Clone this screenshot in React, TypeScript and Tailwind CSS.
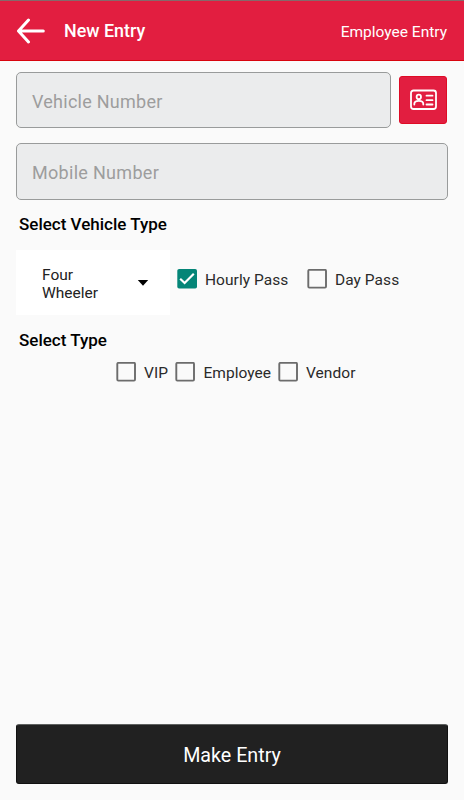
import { useState } from 'react'

interface CheckProps {
  label: string
  checked: boolean
  onChange: () => void
  className?: string
}

function Check ({ label, checked, onChange, className = '' }: CheckProps) {
  return (
    <button type="button" role="checkbox" aria-checked={checked} onClick={onChange} className={`flex h-5 shrink-0 items-center gap-2 ${className}`}>
      <svg width="20" height="20" viewBox="0 0 20 20" fill="none" className="shrink-0">
        {checked
          ? (
            <>
              <rect x=".3" width="19.700" height="19.500" rx="1.800" fill="#048577" />
              <path d="M3.200 9.800 7.600 14 16.800 4.800" stroke="#fff" strokeWidth="2.200" />
            </>
            )
          : <rect x="1.300" y=".9" width="17.700" height="17.700" rx="1" stroke="#6c6c6c" strokeWidth="1.900" />}
      </svg>
      <span className="whitespace-nowrap pt-px text-[15.5px] leading-5 tracking-[0.050px] text-[#2a2a2a]">{label}</span>
    </button>
  )
}

export default function App () {
  const [pass, setPass] = useState('hourly')
  const [type, setType] = useState('')

  return (
    <div className="flex h-[800px] w-[464px] flex-col bg-[#fafafa] font-['Roboto',sans-serif] text-black">
      <header className="flex h-[61px] shrink-0 items-center border-t border-b border-t-[#85696b] border-b-[#d8040e] bg-[#e21e40] px-4 text-white">
        <svg width="29" height="26" viewBox="0 0 29 26" fill="none" stroke="#fff" strokeWidth="3" strokeLinecap="round" strokeLinejoin="round">
          <path d="M12.500 2 2.500 13l10 11M3 13H27.300" />
        </svg>
        <h1 className="ml-[19px] text-[17.900px] font-medium leading-6">New Entry</h1>
        <span className="mt-[2px] mr-px ml-auto text-[15.500px] leading-6">Employee Entry</span>
      </header>

      <main className="flex flex-1 flex-col pt-[11px] pr-[17px] pl-4">
        <div className="flex items-center gap-2">
          <div className="flex h-14 w-[375px] items-center rounded-[5px] border border-[#999b9b] bg-[#ebeced] px-[15px] pt-[2px] text-[18px] tracking-[0.250px] text-[#9d9d9d]">Vehicle Number</div>
          <button type="button" className="flex h-12 w-12 items-center justify-center rounded-[3px] border border-[#df0b25] bg-[#e21e40]">
            <svg width="28" height="22" viewBox="0 0 28 22" fill="none" stroke="#fff" strokeWidth="1.8" strokeLinecap="round">
              <rect x="2" y="1.500" width="25" height="18.500" rx="2.500" />
              <circle cx="9.800" cy="7.900" r="2.200" />
              <path d="M5.300 15.500v-.5c0-4.300 9-4.300 9 0v.5M17.500 6.700h6M17.500 11.200h6M17.500 15.500h6" />
            </svg>
          </button>
        </div>
        <div className="mt-[15px] -mr-px flex h-[57px] items-center rounded-[5px] border border-[#999b9b] bg-[#ebeced] px-[15px] pt-px text-[18px] tracking-[0.300px] text-[#9d9d9d]">Mobile Number</div>

        <h2 className="mt-3 ml-[3px] text-[17px] font-medium leading-6">Select Vehicle Type</h2>
        <div className="mt-[14px] flex">
          <button type="button" className="flex h-[65px] w-[154px] shrink-0 items-center justify-between bg-white pr-[21px] pl-[26px] text-left text-[15.5px] leading-[18px] text-[#222]">
            <span className="w-16 pt-[2px]">Four Wheeler</span>
            <svg width="12" height="6" viewBox="0 0 12 6" className="mt-px"><path d="M.8 0h10.400L6 5.700z" /></svg>
          </button>
          <div className="mt-[19px] ml-[7px] flex">
            <Check label="Hourly Pass" checked={pass === 'hourly'} onChange={() => setPass('hourly')} className="w-[130px]" />
            <Check label="Day Pass" checked={pass === 'day'} onChange={() => setPass('day')} />
          </div>
        </div>

        <h2 className="mt-[13px] ml-[3px] text-[17px] font-medium leading-6">Select Type</h2>
        <div className="mt-[10px] ml-[100px] flex">
          <Check label="VIP" checked={type === 'vip'} onChange={() => setType('vip')} className="w-[59.400px]" />
          <Check label="Employee" checked={type === 'employee'} onChange={() => setType('employee')} className="w-[102.600px]" />
          <Check label="Vendor" checked={type === 'vendor'} onChange={() => setType('vendor')} />
        </div>

        <button type="button" className="mt-auto -mr-px mb-4 h-[60px] rounded-[3px] border border-[#111] border-t-[#5f6160] bg-[#212121] pt-[3px] text-[19.700px] text-white">Make Entry</button>
      </main>
    </div>
  )
}
